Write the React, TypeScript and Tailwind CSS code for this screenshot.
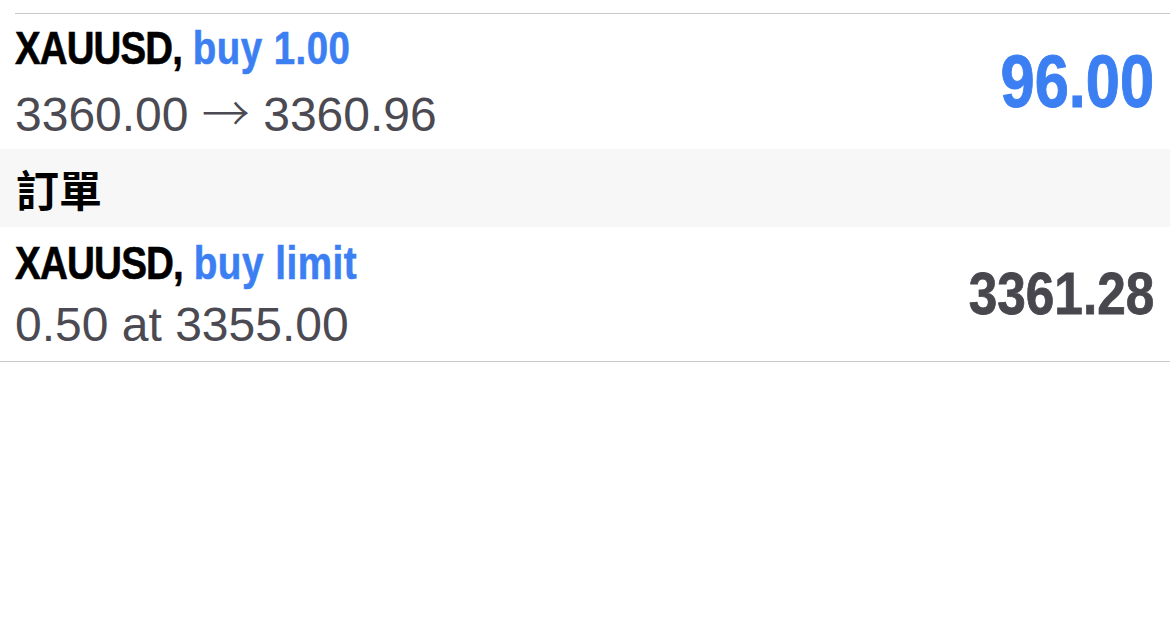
import React from "react";

const bold = { fontFamily: '"Liberation Sans", Arial, sans-serif' };
const cjk = { fontFamily: '"Noto Sans CJK TC", "Noto Sans CJK SC", sans-serif' };

export default function App() {
  return (
    <div className="w-[1170px] h-[643px] bg-white overflow-hidden" style={{ fontFamily: '"Liberation Sans", Arial, sans-serif' }}>
      <div className="h-[13px]" />
      <div className="ml-[15px] h-px bg-[#c8c8cc]" />
      {/* Row 1 */}
      <div className="h-[135px] flex items-center justify-between pl-[15px] pr-[16px]">
        <div className="flex flex-col">
          <div className="text-[46px] leading-[62px] font-bold whitespace-nowrap origin-left scale-x-[0.835] [-webkit-text-stroke:0.6px_currentColor]" style={bold}>
            <span className="text-black tracking-[-1px]">XAUUSD,</span>{" "}
            <span className="text-[#3b7ff2] tracking-[0.6px]">buy 1.00</span>
          </div>
          <div className="text-[48px] leading-[62px] text-[#4b4a52] whitespace-nowrap">
            3360.00 <span className="font-light" style={cjk}>→</span> 3360.96
          </div>
        </div>
        <div className="text-[74px] leading-none font-bold text-[#3b7ff2] whitespace-nowrap origin-right scale-x-[0.83] [-webkit-text-stroke:1px_currentColor]" style={bold}>96.00</div>
      </div>
      {/* Header */}
      <div className="h-[78px] bg-[#f7f7f7] flex items-center pl-[16px]">
        <span className="text-[43px] font-bold text-black" style={cjk}>訂單</span>
      </div>
      {/* Row 2 */}
      <div className="h-[134px] flex items-center justify-between pl-[15px] pr-[16px]">
        <div className="flex flex-col">
          <div className="text-[46px] leading-[62px] font-bold whitespace-nowrap origin-left scale-x-[0.84] [-webkit-text-stroke:0.6px_currentColor]" style={bold}>
            <span className="text-black tracking-[-1px]">XAUUSD,</span>{" "}
            <span className="text-[#3b7ff2] tracking-[0.6px]">buy limit</span>
          </div>
          <div className="text-[48px] leading-[62px] text-[#4b4a52] whitespace-nowrap">0.50 at 3355.00</div>
        </div>
        <div className="text-[59px] leading-none font-bold text-[#48474e] whitespace-nowrap origin-right scale-x-[0.87] [-webkit-text-stroke:0.8px_currentColor]" style={bold}>3361.28</div>
      </div>
      <div className="h-px bg-[#c8c8cc]" />
    </div>
  );
}
